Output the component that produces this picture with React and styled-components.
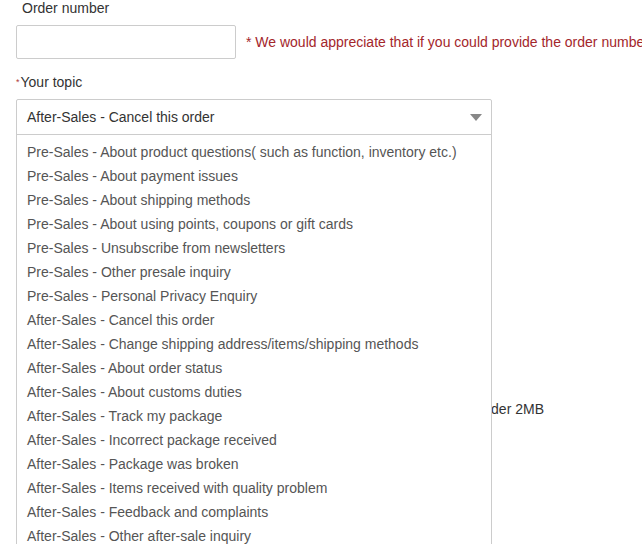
import React from 'react';
import styled, { createGlobalStyle } from 'styled-components';

const topics = [
  'Pre-Sales - About product questions( such as function, inventory etc.)',
  'Pre-Sales - About payment issues',
  'Pre-Sales - About shipping methods',
  'Pre-Sales - About using points, coupons or gift cards',
  'Pre-Sales - Unsubscribe from newsletters',
  'Pre-Sales - Other presale inquiry',
  'Pre-Sales - Personal Privacy Enquiry',
  'After-Sales - Cancel this order',
  'After-Sales - Change shipping address/items/shipping methods',
  'After-Sales - About order status',
  'After-Sales - About customs duties',
  'After-Sales - Track my package',
  'After-Sales - Incorrect package received',
  'After-Sales - Package was broken',
  'After-Sales - Items received with quality problem',
  'After-Sales - Feedback and complaints',
  'After-Sales - Other after-sale inquiry',
];

const GlobalStyle = createGlobalStyle`
  html {
    overflow: hidden;
  }
  body {
    margin: 0;
    min-height: 544px;
    background: #fff;
    font-family: "Liberation Sans", Arial, sans-serif;
    font-size: 14px;
    color: #333;
  }
`;

const Form = styled.div`
  padding: 0 0 0 16px;
  width: 700px;
`;

const Label = styled.div`
  line-height: 16px;
  padding-left: ${p => (p.$indent ? '6px' : '0')};
  margin-top: ${p => p.$top || 0}px;
  color: #333;
`;

const Star = styled.span`
  color: #b03a3a;
  font-size: 9px;
  vertical-align: 2px;
  margin-right: 1px;
`;

const Row = styled.div`
  display: flex;
  align-items: center;
  gap: 10px;
  margin-top: 9px;
`;

const Input = styled.div`
  width: 218px;
  height: 32px;
  border: 1px solid #ccc;
  border-radius: 2px;
  flex-shrink: 0;
`;

const Hint = styled.span`
  color: #a3262b;
  white-space: nowrap;
`;

const SelectWrap = styled.div`
  position: relative;
  width: 476px;
  margin-top: 9px;
`;

const SelectBox = styled.div`
  height: 34px;
  border: 1px solid #ccc;
  border-radius: 2px 2px 0 0;
  display: flex;
  align-items: center;
  justify-content: space-between;
  padding: 0 9px 0 10px;
  color: #333;
`;

const Arrow = styled.span`
  width: 0;
  height: 0;
  border-left: 6px solid transparent;
  border-right: 6px solid transparent;
  border-top: 7px solid #888;
`;

const Menu = styled.ul`
  position: absolute;
  top: 35px;
  left: 0;
  width: 474px;
  margin: 0;
  padding: 5px 0;
  list-style: none;
  background: #fff;
  border: 1px solid #ccc;
  z-index: 2;
`;

const Item = styled.li`
  line-height: 24px;
  padding-left: 10px;
  color: #555;
  white-space: nowrap;
`;

const Textarea = styled.div`
  width: 474px;
  height: 200px;
  border: 1px solid #ccc;
  margin-top: 8px;
`;

const Note = styled.div`
  width: 528px;
  text-align: right;
  line-height: 16px;
  margin-top: 20px;
  color: #333;
`;

export default function App() {
  return (
    <>
      <GlobalStyle />
      <Form>
        <Label $indent>Order number</Label>
        <Row>
          <Input />
          <Hint>* We would appreciate that if you could provide the order number</Hint>
        </Row>
        <Label $top={15}><Star>*</Star>Your topic</Label>
        <SelectWrap>
          <SelectBox>
            <span>After-Sales - Cancel this order</span>
            <Arrow />
          </SelectBox>
          <Menu>
            {topics.map(t => (
              <Item key={t}>{t}</Item>
            ))}
          </Menu>
        </SelectWrap>
        <Label $top={20}>Content</Label>
        <Textarea />
        <Note>Each file should be under 2MB</Note>
      </Form>
    </>
  );
}
